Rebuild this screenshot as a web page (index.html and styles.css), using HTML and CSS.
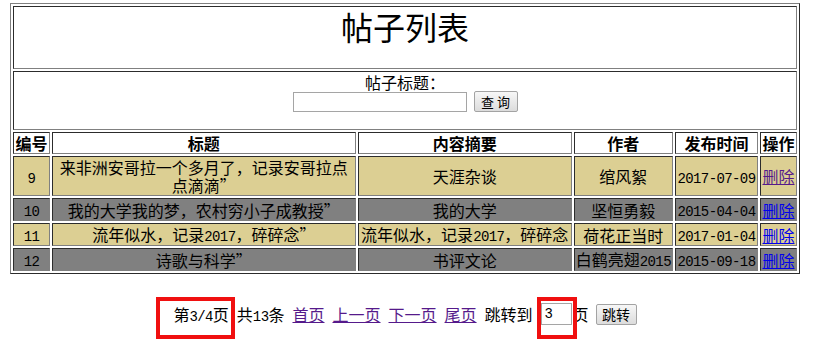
FILE: index.html
```html
<!DOCTYPE html>
<html lang="zh-CN">
<head>
<meta charset="utf-8">
<title>帖子列表</title>
<link rel="stylesheet" href="styles.css">
</head>
<body>
<table class="posts">
  <tr>
    <td colspan="6" class="title-cell"><h1 class="title">帖子列表</h1></td>
  </tr>
  <tr>
    <td colspan="6" class="search-cell">
      <form class="search">
        <div class="search-label">帖子标题：</div>
        <div class="search-line">
          <input class="search-input" type="text">
          <button class="btn btn-query" type="button">查询</button>
        </div>
      </form>
    </td>
  </tr>
  <tr class="head">
    <th class="c-id">编号</th>
    <th class="c-title">标题</th>
    <th class="c-summary">内容摘要</th>
    <th class="c-author">作者</th>
    <th class="c-date">发布时间</th>
    <th class="c-op">操作</th>
  </tr>
  <tr class="row tan">
    <td><span class="n">9</span></td>
    <td class="wrap">来非洲安哥拉一个多月了，记录安哥拉点点滴滴”</td>
    <td>天涯杂谈</td>
    <td>绾风絮</td>
    <td><span class="n">2017-07-09</span></td>
    <td><a class="link visited" href="#">删除</a></td>
  </tr>
  <tr class="row grey">
    <td><span class="n">10</span></td>
    <td class="wrap">我的大学我的梦，农村穷小子成教授”</td>
    <td>我的大学</td>
    <td>坚恒勇毅</td>
    <td><span class="n">2015-04-04</span></td>
    <td><a class="link" href="#">删除</a></td>
  </tr>
  <tr class="row tan">
    <td><span class="n">11</span></td>
    <td class="wrap">流年似水，记录<span class="n">2017</span>，碎碎念”</td>
    <td>流年似水，记录<span class="n">2017</span>，碎碎念</td>
    <td>荷花正当时</td>
    <td><span class="n">2017-01-04</span></td>
    <td><a class="link" href="#">删除</a></td>
  </tr>
  <tr class="row grey">
    <td><span class="n">12</span></td>
    <td class="wrap">诗歌与科学”</td>
    <td>书评文论</td>
    <td>白鹤亮翅<span class="n">2015</span></td>
    <td><span class="n">2015-09-18</span></td>
    <td><a class="link" href="#">删除</a></td>
  </tr>
</table>

<div class="pager">
  <span class="mark mark-page">第<span class="n">3/4</span>页</span>
  <span>共<span class="n">13</span>条</span>
  <a class="plink" href="#">首页</a>
  <a class="plink" href="#">上一页</a>
  <a class="plink" href="#">下一页</a>
  <a class="plink" href="#">尾页</a>
  <span>跳转到</span>
  <span class="jump"><span class="mark mark-input"><input class="page-input n" type="text" value="3"></span>页</span>
  <button class="btn btn-jump" type="button">跳转</button>
</div>
</body>
</html>
```

FILE: styles.css
```css
body {
  margin: 3px 0 0 10px;
  padding-bottom: 24px;
  font-family: "Noto Sans CJK SC", sans-serif;
  font-size: 16px;
  color: #000;
  background: #fff;
}

.n {
  font-family: "Liberation Mono", "Noto Sans CJK SC", monospace;
  font-size: 14px;
  line-height: 1;
  letter-spacing: -0.6px;
  white-space: nowrap;
}

.posts {
  box-sizing: border-box;
  width: 790px;
  border: 1px outset #808080;
  border-spacing: 2px;
  border-collapse: separate;
}

.posts td,
.posts th {
  box-sizing: border-box;
  border: 1px inset #808080;
  padding: 1px;
  line-height: 18px;
  text-align: center;
  vertical-align: middle;
}

.title-cell {
  background: #fff;
}

.title {
  margin: 0 0 22px;
  font-size: 32px;
  line-height: 37px;
  font-weight: normal;
}

.search {
  margin: 0;
  padding-bottom: 16px;
}

.search-label {
  line-height: 18px;
}

.search-line {
  display: flex;
  justify-content: center;
  align-items: center;
  gap: 7px;
  height: 21px;
}

.search-input {
  box-sizing: border-box;
  width: 174px;
  height: 20px;
  margin: 0;
  border: 1px solid #a5a5a5;
  padding: 1px 2px;
}

.btn {
  box-sizing: border-box;
  height: 21px;
  margin: 0;
  padding: 0;
  border: 1px solid #a3a3a3;
  border-radius: 2px;
  background: linear-gradient(#f7f7f7, #dcdcdc);
  font-family: "Noto Sans CJK SC", sans-serif;
  font-size: 13px;
  line-height: 19px;
  color: #000;
}

.btn-query {
  width: 44px;
  letter-spacing: 3px;
  padding-left: 3px;
}

.head th {
  background: #fff;
  font-weight: bold;
  white-space: nowrap;
}

.c-id { width: 37px; }
.c-title { width: 304px; }
.c-summary { width: 214px; }
.c-author { width: 99px; }
.c-date { width: 83px; }
.c-op { width: 37px; }

.row td {
  white-space: nowrap;
}

.row td.wrap {
  white-space: normal;
}

.row.tan td {
  background: #dccf93;
}

.row.grey td {
  background: #808080;
}

.link {
  color: #0000ee;
  text-decoration: underline;
}

.link.visited {
  color: #551a8b;
}

.pager {
  width: 790px;
  height: 24px;
  margin-top: 28px;
  display: flex;
  justify-content: center;
  align-items: center;
  gap: 8px;
  line-height: 18px;
}

.plink {
  color: #551a8b;
  text-decoration: underline;
}

.jump {
  display: flex;
  align-items: center;
  gap: 1px;
}

.mark {
  position: relative;
  display: inline-block;
}

.mark::after {
  content: "";
  position: absolute;
  box-sizing: border-box;
  height: 42px;
  border: 4px solid #f01010;
  pointer-events: none;
}

.mark-page {
  height: 18px;
}

.mark-page::after {
  left: -17px;
  right: -6px;
  top: -8px;
}

.mark-input {
  height: 22px;
}

.mark-input::after {
  left: -4px;
  right: -5px;
  top: -6px;
}

.page-input {
  display: block;
  box-sizing: border-box;
  width: 31px;
  height: 22px;
  margin: 0;
  border: 1px solid #a5a5a5;
  padding: 1px 3px;
  letter-spacing: 0;
}

.btn-jump {
  width: 41px;
  margin-left: -1px;
  font-size: 14px;
}
```
